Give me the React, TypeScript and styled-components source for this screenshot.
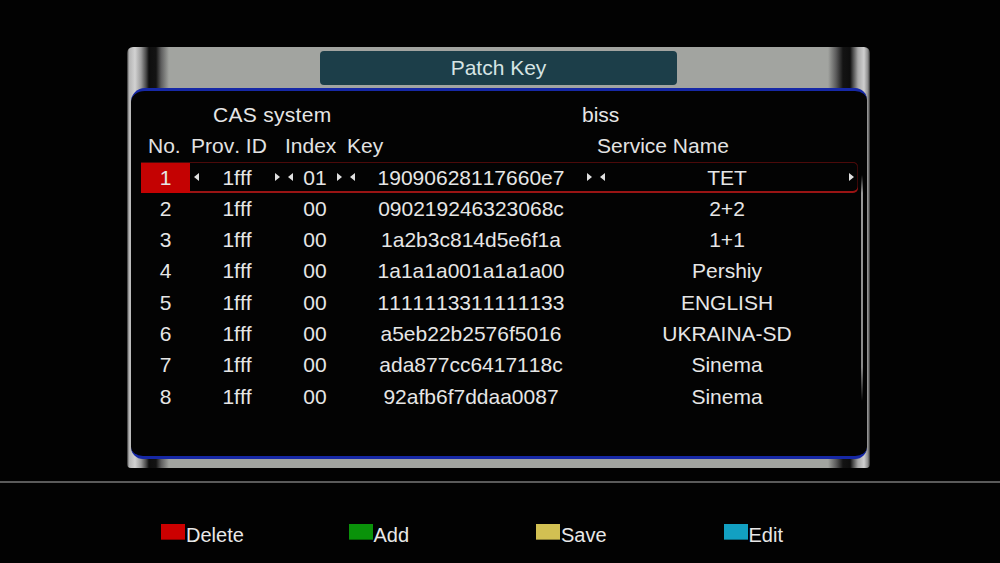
import React from "react";
import styled, { createGlobalStyle } from "styled-components";

interface KeyRow {
  no: number;
  provId: string;
  index: string;
  key: string;
  service: string;
}

const rows: KeyRow[] = [
  { no: 1, provId: "1fff", index: "01", key: "19090628117660e7", service: "TET" },
  { no: 2, provId: "1fff", index: "00", key: "090219246323068c", service: "2+2" },
  { no: 3, provId: "1fff", index: "00", key: "1a2b3c814d5e6f1a", service: "1+1" },
  { no: 4, provId: "1fff", index: "00", key: "1a1a1a001a1a1a00", service: "Pershiy" },
  { no: 5, provId: "1fff", index: "00", key: "1111113311111133", service: "ENGLISH" },
  { no: 6, provId: "1fff", index: "00", key: "a5eb22b2576f5016", service: "UKRAINA-SD" },
  { no: 7, provId: "1fff", index: "00", key: "ada877cc6417118c", service: "Sinema" },
  { no: 8, provId: "1fff", index: "00", key: "92afb6f7ddaa0087", service: "Sinema" }
];

const legend = [
  { label: "Delete", color: "#cc0000" },
  { label: "Add", color: "#0a920a" },
  { label: "Save", color: "#d2c052" },
  { label: "Edit", color: "#12a0c2" }
];

const GlobalStyle = createGlobalStyle`
  html, body {
    margin: 0;
    padding: 0;
    background: #020202;
  }
  body {
    font-family: "Liberation Sans", Arial, sans-serif;
    color: #e6e6e6;
    font-kerning: none;
    font-variant-numeric: tabular-nums;
  }
`;

const Screen = styled.div`
  width: 1000px;
  height: 563px;
  overflow: hidden;
  background: #020202;
  padding-top: 47px;
  box-sizing: border-box;
`;

const silver = `linear-gradient(
  to right,
  #2a2a2a 0px,
  #b4b4b4 2px,
  #d2d2d2 8px,
  #9c9c9c 14px,
  #4a4a4a 19px,
  #0e0e0e 22px,
  #131313 29px,
  #5c5c5c 34px,
  #a2a4a0 42px,
  #a2a4a0 calc(100% - 42px),
  #5c5c5c calc(100% - 34px),
  #131313 calc(100% - 27px),
  #0e0e0e calc(100% - 20px),
  #4a4a4a calc(100% - 17px),
  #a8a8a8 calc(100% - 12px),
  #cfcfcf calc(100% - 6px),
  #8a8a8a calc(100% - 2px),
  #2a2a2a 100%
)`;

const Frame = styled.div`
  width: 743px;
  margin-left: 127px;
  display: flex;
  flex-direction: column;
  background: ${silver};
  border-radius: 6px 6px 4px 4px;
`;

const TopBand = styled.div`
  height: 41px;
  display: flex;
  justify-content: center;
  align-items: flex-start;
  padding-top: 4px;
  box-sizing: border-box;
`;

const TitleBox = styled.div`
  width: 357px;
  height: 34px;
  border-radius: 4px;
  background: #1c3e49;
  color: #d6e4e4;
  font-size: 21px;
  line-height: 34px;
  text-align: center;
`;

const Panel = styled.div`
  height: 371px;
  margin: 0 3px 0 4px;
  box-sizing: border-box;
  background: #030303;
  border-top: 3px solid #1628a6;
  border-bottom: 3px solid #1628a6;
  border-radius: 14px 12px 12px 12px;
  padding: 8px 0 0 10px;
  display: flex;
  align-items: flex-start;
`;

const BottomBand = styled.div`
  height: 9px;
`;

const Table = styled.div`
  width: 717px;
  display: flex;
  flex-direction: column;
  font-size: 21px;
`;

const InfoRow = styled.div`
  height: 31.3px;
  line-height: 31.3px;
  display: flex;
  padding-left: 72px;
`;

const InfoLabel = styled.span`
  width: 369px;
  letter-spacing: 0.3px;
`;

const gridCols = "49px 94px 62px 250px 262px";

const HeadRow = styled.div`
  height: 31.3px;
  line-height: 31.3px;
  display: grid;
  grid-template-columns: ${gridCols};
  color: #e2e2e2;
`;

const HeadCell = styled.span<{ $pad?: number }>`
  padding-left: ${({ $pad }) => $pad ?? 1}px;
  white-space: nowrap;
`;

const DataRow = styled.div<{ $selected?: boolean }>`
  height: 31.3px;
  line-height: 31.3px;
  display: grid;
  grid-template-columns: ${gridCols};
  border-radius: 0 5px 5px 0;
  box-shadow: ${({ $selected }) =>
    $selected
      ? "inset 0 1px 0 #4c0a0a, inset 0 -2px 0 #9a1414, inset -1px 0 0 #3a0808"
      : "none"};
`;

const NoCell = styled.span<{ $selected?: boolean }>`
  text-align: center;
  background: ${({ $selected }) => ($selected ? "#c40202" : "transparent")};
  height: 30px;
  margin-top: 1px;
  line-height: 29px;
`;

const ValueCell = styled.span`
  display: grid;
  grid-template-columns: 6px 1fr 6px;
  align-items: center;
  padding: 0 4px;
  white-space: nowrap;
  text-align: center;
`;

const Arrow = styled.span<{ $dir: "left" | "right" }>`
  width: 0;
  height: 0;
  border-top: 4px solid transparent;
  border-bottom: 4px solid transparent;
  ${({ $dir }) =>
    $dir === "left"
      ? "border-right: 5px solid #e0e0e0; justify-self: start;"
      : "border-left: 5px solid #e0e0e0; justify-self: end;"}
`;

const ScrollTrack = styled.div`
  width: 2px;
  height: 226px;
  margin: 76px 0 0 3px;
  background: linear-gradient(
    to bottom,
    rgba(140, 140, 140, 0) 0%,
    #9a9a9a 8%,
    #8a8a8a 85%,
    rgba(120, 120, 120, 0) 100%
  );
`;

const Divider = styled.div`
  height: 2px;
  margin-top: 13px;
  background: #5a5a5a;
`;

const Legend = styled.div`
  display: flex;
  padding: 41px 0 0 161px;
`;

const LegendItem = styled.div`
  width: 187.5px;
  display: flex;
  align-items: flex-start;
`;

const Swatch = styled.span<{ $color: string }>`
  width: 24px;
  height: 16px;
  background: ${({ $color }) => $color};
  box-shadow: inset 0 -1px 0 rgba(0, 0, 0, 0.35);
  flex-shrink: 0;
`;

const LegendLabel = styled.span`
  font-size: 20px;
  line-height: 20px;
  margin-top: 1px;
  margin-left: 1px;
  color: #e8e8e8;
`;

const Editable = ({ value, active }: { value: string; active: boolean }) => (
  <ValueCell>
    {active ? <Arrow $dir="left" /> : <span />}
    <span>{value}</span>
    {active ? <Arrow $dir="right" /> : <span />}
  </ValueCell>
);

export default function App() {
  return (
    <Screen>
      <GlobalStyle />
      <Frame>
        <TopBand>
          <TitleBox>Patch Key</TitleBox>
        </TopBand>
        <Panel>
          <Table>
            <InfoRow>
              <InfoLabel>CAS system</InfoLabel>
              <span>biss</span>
            </InfoRow>
            <HeadRow>
              <HeadCell $pad={7}>No.</HeadCell>
              <HeadCell>Prov. ID</HeadCell>
              <HeadCell>Index</HeadCell>
              <HeadCell>Key</HeadCell>
              <HeadCell>Service Name</HeadCell>
            </HeadRow>
            {rows.map((r, i) => {
              const active = i === 0;
              return (
                <DataRow key={r.no} $selected={active}>
                  <NoCell $selected={active}>{r.no}</NoCell>
                  <Editable value={r.provId} active={active} />
                  <Editable value={r.index} active={active} />
                  <Editable value={r.key} active={active} />
                  <Editable value={r.service} active={active} />
                </DataRow>
              );
            })}
          </Table>
          <ScrollTrack />
        </Panel>
        <BottomBand />
      </Frame>
      <Divider />
      <Legend>
        {legend.map((l) => (
          <LegendItem key={l.label}>
            <Swatch $color={l.color} />
            <LegendLabel>{l.label}</LegendLabel>
          </LegendItem>
        ))}
      </Legend>
    </Screen>
  );
}
